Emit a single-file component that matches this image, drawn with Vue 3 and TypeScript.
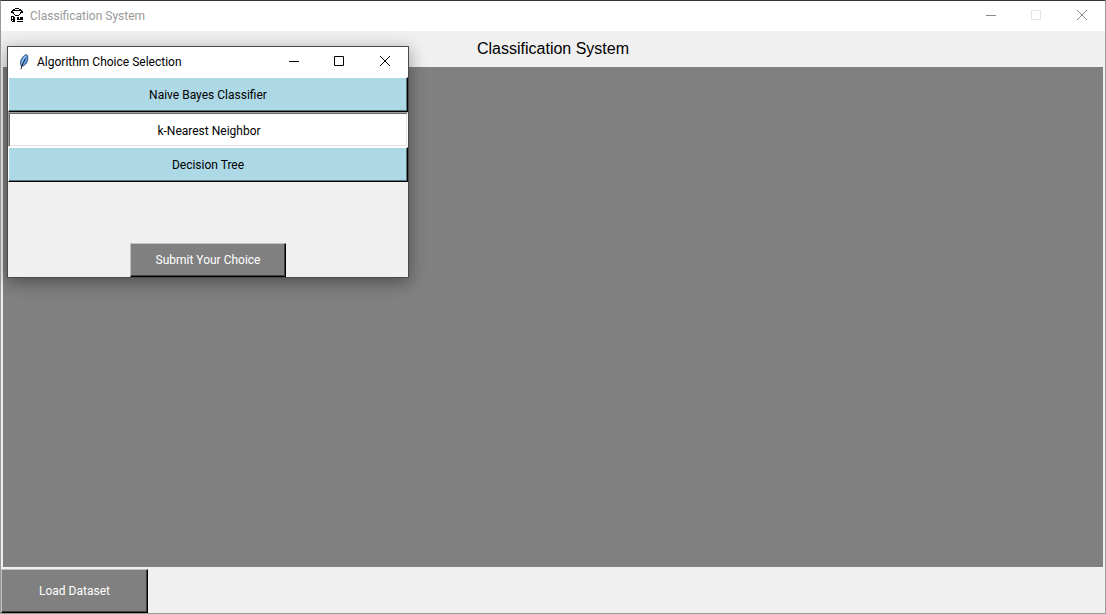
<script setup lang="ts">
import { ref } from 'vue'

const algorithms: string[] = ['Naive Bayes Classifier', 'k-Nearest Neighbor', 'Decision Tree']
const choice = ref<string>('k-Nearest Neighbor')
</script>

<template>
  <main class="window">
    <header class="titlebar inactive">
      <svg class="app-icon" width="16" height="16" viewBox="0 0 16 16" shape-rendering="crispEdges" aria-hidden="true">
        <path fill="#000" d="M6 0h4v1H6zM4 1h2v1H4zM10 1h2v1h-2zM3 2h10v1H3zM2 3h2v2H2zM12 3h2v2h-2zM4 4h1v2H4zM11 4h1v2h-1zM5 6h1v1H5zM10 6h1v1h-1zM6 7h4v1H6zM2 8h3v1H2zM2 9h1v2H2zM4 9h2v2H4zM8 9h6v3H8zM2 11h4v1H2zM2 12h1v1H2zM4 12h2v1H4zM3 13h3v1H3zM8 13h6v1H8z" />
        <path fill="#fff" d="M10 9h1v2h-1z" />
      </svg>
      <span class="title">Classification System</span>
      <div class="controls">
        <button class="control minimize" type="button" aria-label="Minimize">
          <svg width="10" height="10" viewBox="0 0 10 10"><path d="M0 5.5h10" /></svg>
        </button>
        <button class="control" type="button" aria-label="Maximize" disabled>
          <svg width="10" height="10" viewBox="0 0 10 10"><path d="M.5.5h9v9h-9z" /></svg>
        </button>
        <button class="control" type="button" aria-label="Close">
          <svg width="10" height="10" viewBox="0 0 10 10"><path d="M0 0l10 10M10 0L0 10" /></svg>
        </button>
      </div>
    </header>

    <h1 class="heading">Classification System</h1>
    <section class="canvas"></section>
    <footer class="footer">
      <button class="tk-button load" type="button">Load Dataset</button>
    </footer>

    <form class="dialog" @submit.prevent>
      <div class="titlebar">
        <svg class="app-icon" width="16" height="16" viewBox="0 0 16 16" aria-hidden="true">
          <path d="M10.500.5C12.500 2 12.200 6 10.500 9 9.200 11 7.500 12 5.500 12.500 3.800 9.500 4.500 6 6.200 3.800 7.600 2 9 .8 10.500.5z" fill="#5f9be6" stroke="#26384f" stroke-width=".8" />
          <path d="M9.500 2.200C7.500 4.500 6.200 7 5.800 9.500" fill="none" stroke="#b4d5fa" />
          <path d="M9.500 4.500C7.500 8 5.800 11 5 15.200" fill="none" stroke="#111" stroke-width=".9" />
        </svg>
        <span class="title">Algorithm Choice Selection</span>
        <div class="controls">
          <button class="control minimize" type="button" aria-label="Minimize">
            <svg width="10" height="10" viewBox="0 0 10 10"><path d="M0 5.500h10" /></svg>
          </button>
          <button class="control" type="button" aria-label="Maximize">
            <svg width="10" height="10" viewBox="0 0 10 10"><path d="M.5.5h9v9h-9z" /></svg>
          </button>
          <button class="control" type="button" aria-label="Close">
            <svg width="10" height="10" viewBox="0 0 10 10"><path d="M0 0l10 10M10 0L0 10" /></svg>
          </button>
        </div>
      </div>
      <div class="options" role="radiogroup" aria-label="Algorithm">
        <label v-for="name in algorithms" :key="name" class="option" :class="{ selected: choice === name }">
          <input v-model="choice" type="radio" name="algorithm" :value="name" />
          <span>{{ name }}</span>
        </label>
      </div>
      <button class="tk-button submit" type="submit">Submit Your Choice</button>
    </form>
  </main>
</template>

<style>
body {
  margin: 0;
}
</style>

<style scoped>
.window,
.window * {
  box-sizing: border-box;
}

.window {
  position: relative;
  display: flex;
  flex-direction: column;
  min-height: 100vh;
  overflow: hidden;
  border: 1px solid #999;
  border-top-color: #373537;
  background: #f0f0f0;
  color: #000;
  font: 12px/16px Roboto, "Open Sans", sans-serif;
}

.titlebar {
  display: flex;
  align-items: center;
  height: 30px;
  padding-left: 8px;
  background: #fff;
}

.app-icon {
  flex: none;
  margin-right: 5px;
}

.title {
  flex: 1;
  white-space: nowrap;
}

.inactive .title {
  color: #999;
}

.controls {
  display: flex;
  align-self: stretch;
}

.control {
  display: flex;
  align-items: center;
  justify-content: center;
  width: 46px;
  padding: 0 0 2px;
  border: 0;
  background: none;
  color: #000;
}

.control.minimize {
  width: 44px;
}

.control svg {
  fill: none;
  stroke: currentColor;
}

.inactive .control {
  color: #8a8a8a;
}

.inactive .control:disabled {
  color: #e6e6e6;
}

.heading {
  margin: 0;
  font: 16px/36px "Liberation Sans", Arial, sans-serif;
  text-align: center;
}

.canvas {
  flex: 1;
  margin: 0 2px 2px;
  background: #808080;
}

.footer {
  display: flex;
}

.tk-button {
  padding: 0;
  border: 1px solid #000;
  border-top-color: #c0c0c0;
  border-left-color: #c0c0c0;
  background: #808080;
  box-shadow: inset -1px -1px #404040;
  color: #fff;
  font: inherit;
  white-space: nowrap;
}

.load {
  width: 147px;
  height: 44px;
}

.dialog {
  position: absolute;
  top: 45px;
  left: 6px;
  display: flex;
  flex-direction: column;
  width: 402px;
  border: 1px solid #4a4a4a;
  background: #f0f0f0;
  box-shadow: 0 4px 16px rgba(0, 0, 0, 0.4);
}

.options {
  display: flex;
  flex-direction: column;
}

.option {
  position: relative;
  display: flex;
  align-items: center;
  justify-content: center;
  height: 35px;
  border: 1px solid #000;
  border-top-color: #fff;
  border-left-color: #fff;
  background: #add8e6;
  box-shadow: inset -1px -1px #56757e;
}

.option.selected {
  padding: 2px 0 0 2px;
  border-color: #a0a0a0 #fff #fff #a0a0a0;
  background: #fff;
  box-shadow: inset 1px 1px #696969, inset -1px -1px #e3e3e3;
}

.option input {
  position: absolute;
  width: 1px;
  height: 1px;
  margin: 0;
  opacity: 0;
}

.submit {
  align-self: center;
  width: 156px;
  height: 34px;
  margin-top: 61px;
}
</style>
